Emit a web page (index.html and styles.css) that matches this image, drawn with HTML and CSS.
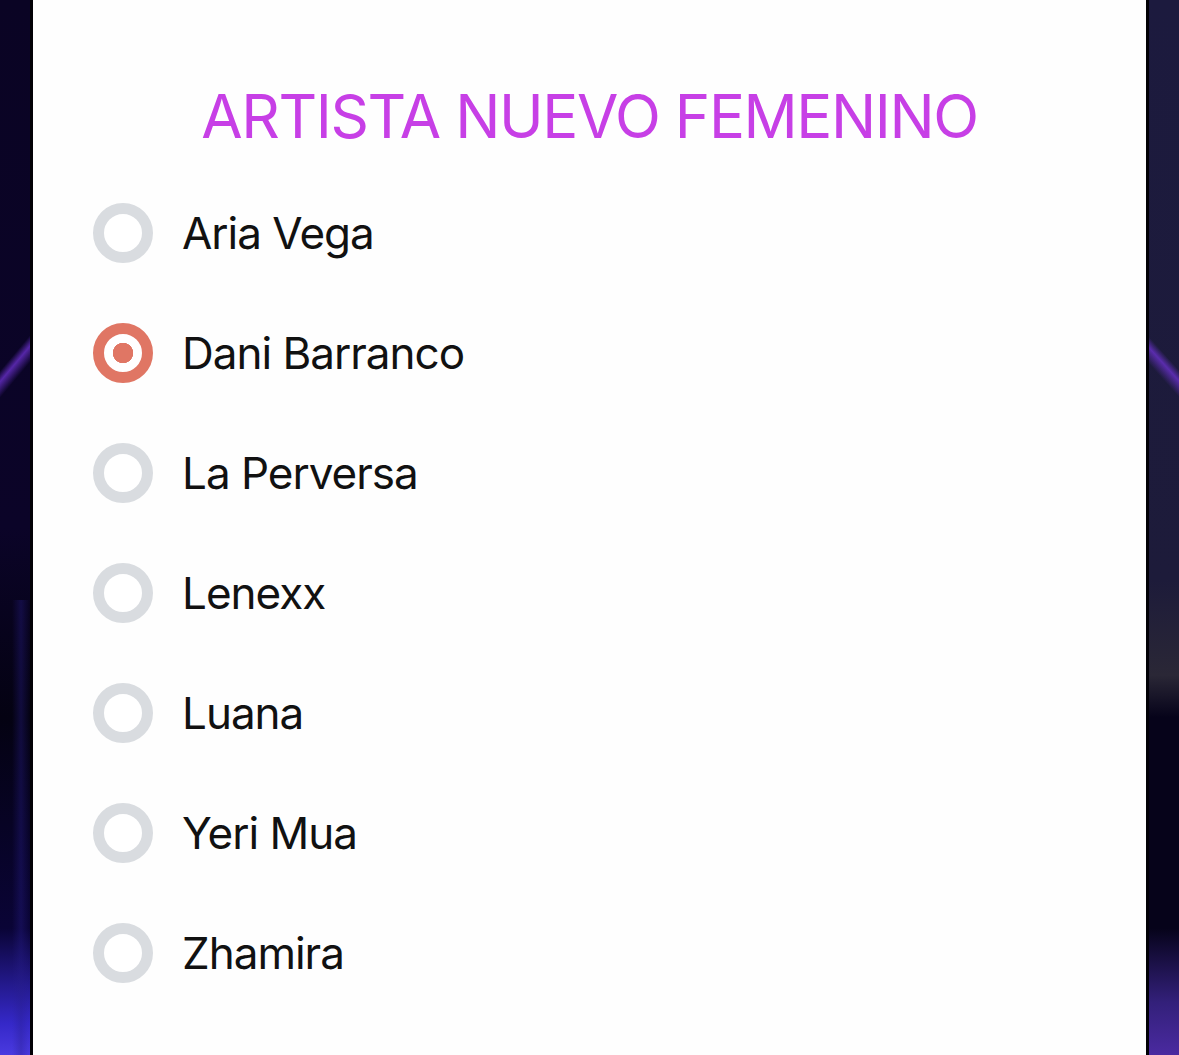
FILE: index.html
```html
<!DOCTYPE html>
<html lang="es">
<head>
<meta charset="utf-8">
<title>Artista Nuevo Femenino</title>
<link rel="stylesheet" href="styles.css">
</head>
<body>
<div class="stage">
  <div class="side side-left"></div>
  <main class="card">
    <h1 class="title">ARTISTA NUEVO FEMENINO</h1>
    <ul class="options">
      <li class="option"><span class="radio"></span><span class="label">Aria Vega</span></li>
      <li class="option"><span class="radio radio-on"></span><span class="label">Dani Barranco</span></li>
      <li class="option"><span class="radio"></span><span class="label">La Perversa</span></li>
      <li class="option"><span class="radio"></span><span class="label">Lenexx</span></li>
      <li class="option"><span class="radio"></span><span class="label">Luana</span></li>
      <li class="option"><span class="radio"></span><span class="label">Yeri Mua</span></li>
      <li class="option"><span class="radio"></span><span class="label">Zhamira</span></li>
    </ul>
  </main>
  <div class="side side-right"></div>
</div>
</body>
</html>
```
FILE: styles.css
```css
html, body {
  margin: 0;
  padding: 0;
  background: #07031a;
}
.stage {
  display: flex;
  width: 1179px;
  height: 1055px;
  overflow: hidden;
}
.side {
  flex: none;
  height: 100%;
}
.side-left {
  width: 30px;
  border-right: 3px solid #020106;
  background:
    linear-gradient(130deg, transparent 34%, rgba(110,50,210,0.75) 35%, transparent 36.5%),
    linear-gradient(to right, transparent 40%, rgba(40,30,140,0.35) 70%, transparent 100%) 0 600px / 100% 455px no-repeat,
    linear-gradient(to bottom, #0a0424 0%, #0b0428 50%, #040212 68%, #0a0436 88%, #3528c8 97%, #4a3ae0 100%);
}
.side-right {
  width: 30px;
  border-left: 3px solid #020106;
  background:
    linear-gradient(48deg, transparent 63.5%, rgba(110,50,210,0.75) 65%, transparent 66%),
    linear-gradient(to bottom, #1c1a3e 0%, #1d1b3a 55%, #2a2736 64%, #06031a 68%, #06031a 88%, #33207a 95%, #4a2aa0 100%);
}
.card {
  flex: 1;
  background: #fefefe;
  height: 100%;
  padding: 84px 0 0 0;
  box-sizing: border-box;
  font-family: Inter, "Noto Sans", sans-serif;
}
.title {
  margin: 0;
  text-align: center;
  font-weight: 400;
  font-size: 60px;
  line-height: 64px;
  color: #c73fe6;
  letter-spacing: -1.4px;
}
.options {
  list-style: none;
  margin: 55px 0 0 0;
  padding: 0 0 0 60px;
  display: flex;
  flex-direction: column;
  gap: 60px;
}
.option {
  display: flex;
  align-items: center;
  height: 60px;
  gap: 29px;
}
.radio {
  flex: none;
  width: 60px;
  height: 60px;
  border-radius: 50%;
  box-sizing: border-box;
  border: 11px solid #d9dce0;
  background: #fff;
}
.radio-on {
  border-color: #e07664;
  background: radial-gradient(circle, #e07664 0 10px, #fff 10.5px);
}
.label {
  font-size: 44px;
  color: #111;
  letter-spacing: -1px;
}
```
